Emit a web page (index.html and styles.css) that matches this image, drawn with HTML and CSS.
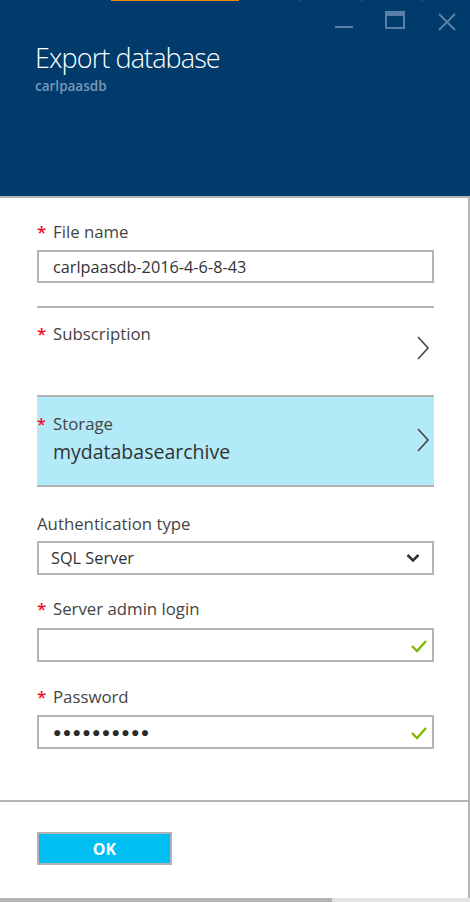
FILE: index.html
```html
<!DOCTYPE html>
<html>
<head>
<meta charset="utf-8">
<link rel="stylesheet" href="styles.css">
</head>
<body>
<div class="blade">
  <header class="head">
    <div class="tabs">
      <span class="tab t1"></span>
      <span class="tab t2"></span>
      <span class="tab t3"></span>
      <span class="tab t4"></span>
      <span class="tab t5"></span>
    </div>
    <div class="controls">
      <svg class="ctl min" width="20" height="20" viewBox="0 0 20 20"><rect x="1" y="15" width="18" height="2" fill="#5a7ea6"/></svg>
      <svg class="ctl max" width="22" height="20" viewBox="0 0 22 20"><rect x="2" y="1" width="18" height="16" fill="none" stroke="#5a7ea6" stroke-width="2"/><rect x="2" y="1" width="18" height="4" fill="#5a7ea6"/></svg>
      <svg class="ctl close" width="20" height="20" viewBox="0 0 20 20"><path d="M2 2 L18 18 M18 2 L2 18" stroke="#5a7ea6" stroke-width="2"/></svg>
    </div>
    <h1 class="title">Export database</h1>
    <div class="subtitle">carlpaasdb</div>
  </header>
  <main class="content">
    <form class="form">
      <div class="field first">
        <label class="label"><span class="req">*</span>File name</label>
        <div class="input"><span class="value">carlpaasdb-2016-4-6-8-43</span></div>
      </div>
      <div class="nav-row sub">
        <div class="nav-text">
          <div class="label"><span class="req">*</span>Subscription</div>
        </div>
        <svg class="chev" width="14" height="24" viewBox="0 0 14 24"><path d="M2 1 L12 12 L2 23" fill="none" stroke="#444" stroke-width="1.6"/></svg>
      </div>
      <div class="nav-row storage">
        <div class="nav-text">
          <div class="label"><span class="req">*</span>Storage</div>
          <div class="nav-value">mydatabasearchive</div>
        </div>
        <svg class="chev" width="14" height="24" viewBox="0 0 14 24"><path d="M2 1 L12 12 L2 23" fill="none" stroke="#444" stroke-width="1.6"/></svg>
      </div>
      <div class="field auth">
        <label class="label plain">Authentication type</label>
        <div class="input select"><span class="value sel">SQL Server</span>
          <svg class="down" width="14" height="10" viewBox="0 0 14 10"><path d="M1.5 2 L7 7.5 L12.5 2" fill="none" stroke="#333" stroke-width="2.6"/></svg>
        </div>
      </div>
      <div class="field login">
        <label class="label"><span class="req">*</span>Server admin login</label>
        <div class="input"><span class="value"></span>
          <svg class="check" width="16" height="14" viewBox="0 0 16 14"><path d="M1 7 L6 12 L15 2" fill="none" stroke="#7fba00" stroke-width="2.4"/></svg>
        </div>
      </div>
      <div class="field pass">
        <label class="label"><span class="req">*</span>Password</label>
        <div class="input"><span class="value dots">●●●●●●●●●●</span>
          <svg class="check" width="16" height="14" viewBox="0 0 16 14"><path d="M1 7 L6 12 L15 2" fill="none" stroke="#7fba00" stroke-width="2.4"/></svg>
        </div>
      </div>
    </form>
    <footer class="foot">
      <button type="button" class="ok">OK</button>
    </footer>
  </main>
  <div class="scroll"><span class="thumb"></span></div>
</div>
</body>
</html>
```
FILE: styles.css
```css
html, body {
  margin: 0;
  padding: 0;
}
body {
  width: 470px;
  height: 902px;
  overflow: hidden;
  background: #fff;
  font-family: "Open Sans", "Noto Sans", sans-serif;
}
.blade {
  width: 470px;
  height: 902px;
  display: flex;
  flex-direction: column;
}
.head {
  height: 196px;
  background: #003b6c;
  box-sizing: border-box;
  position: relative;
  padding: 0 0 0 35px;
}
.tabs {
  position: absolute;
  top: 0;
  left: 0;
  right: 0;
  height: 1px;
  display: flex;
}
.tab { height: 1px; display: block; }
.t1 { width: 111px; }
.t2 { width: 128px; background: #f18a00; }
.t3 { width: 60px; border-right: 1px solid #4a6b8e; }
.t4 { width: 61px; border-right: 1px solid #4a6b8e; }
.t5 { width: 60px; border-right: 1px solid #4a6b8e; }
.controls {
  display: flex;
  justify-content: flex-end;
  align-items: flex-start;
  padding: 11px 13px 0 0;
  height: 20px;
}
.ctl { display: block; }
.min { margin-right: 30px; }
.max { margin-right: 31px; }
.close { margin-top: 1px; }
.title {
  margin: 10px 0 0 0;
  font-weight: 300;
  font-size: 27px;
  line-height: 34px;
  color: #fff;
  letter-spacing: -0.9px;
}
.subtitle {
  margin-top: 3px;
  font-size: 13.5px;
  font-weight: 600;
  color: #7a98b8;
  line-height: 16px;
}
.content {
  flex: 1;
  border-top: 2px solid #b3b3b3;
  border-right: 2px solid #b3b3b3;
  display: flex;
  flex-direction: column;
}
.form {
  padding: 0 34px 0 37px;
  height: 604px;
  box-sizing: border-box;
  border-bottom: 2px solid #b3b3b3;
}
.field { display: flex; flex-direction: column; }
.field.first { padding-top: 24px; }
.label {
  font-size: 16.8px;
  line-height: 20px;
  color: #444;
  display: flex;
  align-items: flex-start;
}
.req {
  color: #e81123;
  width: 16px;
  font-size: 17px;
  line-height: 20px;
  font-weight: 600;
}
.input {
  margin-top: 8px;
  height: 34px;
  border: 2px solid #b3b3b3;
  box-sizing: border-box;
  display: flex;
  align-items: center;
  padding: 0 4px 0 14px;
}
.first .input { height: 33px; }
.value {
  flex: 1;
  font-size: 16.3px;
  color: #333;
  line-height: 20px;
}
.dots { font-size: 14px; letter-spacing: 1.3px; color: #2b2b2b; }
.check { display: block; margin-right: 1px; margin-top: 2px; }
.nav-row {
  display: flex;
  border-top: 2px solid #b3b3b3;
  box-sizing: border-box;
  align-items: flex-start;
}
.sub {
  margin-top: 23px;
  height: 89px;
  padding-top: 16px;
}
.sub .chev { margin-top: 12px; }
.storage {
  height: 92px;
  background: #b3eaf8;
  border-bottom: 2px solid #b3b3b3;
  padding-top: 17px;
}
.storage .chev { margin-top: 14px; }
.nav-text { flex: 1; }
.storage .req { font-size: 16px; }
.nav-value {
  margin-left: 16px;
  margin-top: 7px;
  font-size: 19.5px;
  line-height: 22px;
  color: #333;
}
.chev { display: block; margin-right: 4px; }
.auth { margin-top: 27px; }
.select { padding-right: 12px; margin-top: 7px; }
.sel { margin-left: -2px; }
.down { display: block; }
.login { margin-top: 24px; }
.login .input { margin-top: 9px; }
.pass { margin-top: 25px; }
.foot {
  flex: 1;
  padding: 30px 0 0 37px;
}
.ok {
  width: 135px;
  height: 33px;
  background: #00bdf2;
  border: 2px solid #b3b3b3;
  color: #fff;
  font-family: "Open Sans", "Noto Sans", sans-serif;
  font-weight: 700;
  font-size: 16px;
  padding: 0;
  display: block;
}
.scroll {
  height: 4px;
  background: #e3e3e3;
  display: flex;
}
.thumb {
  width: 332px;
  background: #b3b3b3;
  display: block;
}
```
